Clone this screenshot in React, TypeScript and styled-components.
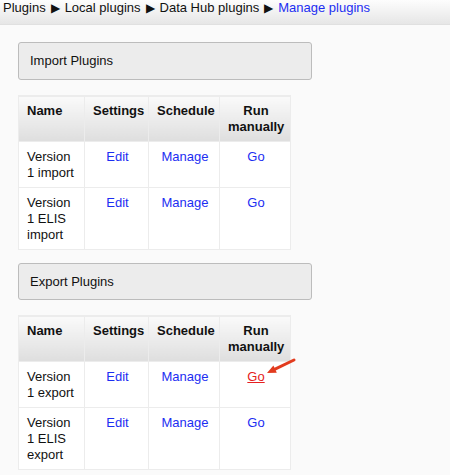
import React from "react";
import styled, { createGlobalStyle } from "styled-components";

const GlobalStyle = createGlobalStyle`
  html, body {
    margin: 0;
    padding: 0;
    background: #fafafa;
  }
  body {
    font-family: "Liberation Sans", Arial, Helvetica, sans-serif;
    font-size: 13px;
    line-height: 16px;
    color: #111;
  }
`;

const Page = styled.div`
  position: relative;
  width: 450px;
  height: 475px;
  overflow: hidden;
`;

const Breadcrumb = styled.div`
  height: 25px;
  padding: 0 0 0 3px;
  line-height: 15px;
  background: linear-gradient(#fdfdfd, #e6e6e6);
  border-bottom: 1px solid #e0e0e0;
  box-sizing: border-box;
  white-space: nowrap;
`;

const Crumb = styled.span<{ $current?: boolean }>`
  color: ${(p) => (p.$current ? "#1c2ef2" : "#111")};
`;

const Sep = styled.span`
  display: inline-block;
  margin: 0 5px 0 5px;
  font-size: 12px;
`;

const Content = styled.div`
  padding: 17px 0 0 18px;
`;

const SectionHeader = styled.div<{ $h?: number }>`
  width: 294px;
  height: ${(p) => p.$h ?? 38}px;
  box-sizing: border-box;
  padding: 0 11px;
  display: flex;
  align-items: center;
  background: #ececec;
  border: 1px solid #bcbcbc;
  border-radius: 3px;
`;

const Table = styled.table`
  margin: 15px 0 13px;
  border-collapse: collapse;
  table-layout: fixed;
  width: 272px;
  background: #fff;
`;

const Th = styled.th<{ $left?: boolean }>`
  padding: 7px 6px 6px 8px;
  font-weight: bold;
  text-align: ${(p) => (p.$left ? "left" : "center")};
  vertical-align: top;
  background: linear-gradient(#fafafa, #dedede);
  border: 1px solid #ececec;
  border-bottom: none;
`;

const Td = styled.td<{ $left?: boolean }>`
  padding: 7px 6px 6px 8px;
  text-align: ${(p) => (p.$left ? "left" : "center")};
  vertical-align: top;
  border: 1px solid #ececec;
`;

const Link = styled.a<{ $hot?: boolean }>`
  color: ${(p) => (p.$hot ? "#e52020" : "#1c2ef2")};
  text-decoration: ${(p) => (p.$hot ? "underline" : "none")};
  cursor: pointer;
`;

const Arrow = styled.svg`
  position: absolute;
  left: 264px;
  top: 355px;
`;

type Row = { name: string; hot?: boolean };

const PluginTable = ({ rows }: { rows: Row[] }) => (
  <Table>
    <colgroup>
      <col style={{ width: 66 }} />
      <col style={{ width: 64 }} />
      <col style={{ width: 71 }} />
      <col style={{ width: 71 }} />
    </colgroup>
    <thead>
      <tr>
        <Th $left>Name</Th>
        <Th>Settings</Th>
        <Th>Schedule</Th>
        <Th>Run manually</Th>
      </tr>
    </thead>
    <tbody>
      {rows.map((r) => (
        <tr key={r.name}>
          <Td $left>{r.name}</Td>
          <Td>
            <Link>Edit</Link>
          </Td>
          <Td>
            <Link>Manage</Link>
          </Td>
          <Td>
            <Link $hot={r.hot}>Go</Link>
          </Td>
        </tr>
      ))}
    </tbody>
  </Table>
);

export default function App() {
  return (
    <Page>
      <GlobalStyle />
      <Breadcrumb>
        <Crumb>Plugins</Crumb>
        <Sep>▶</Sep>
        <Crumb>Local plugins</Crumb>
        <Sep>▶</Sep>
        <Crumb>Data Hub plugins</Crumb>
        <Sep>▶</Sep>
        <Crumb $current>Manage plugins</Crumb>
      </Breadcrumb>
      <Content>
        <SectionHeader>Import Plugins</SectionHeader>
        <PluginTable rows={[{ name: "Version 1 import" }, { name: "Version 1 ELIS import" }]} />
        <SectionHeader $h={37}>Export Plugins</SectionHeader>
        <PluginTable rows={[{ name: "Version 1 export", hot: true }, { name: "Version 1 ELIS export" }]} />
      </Content>
      <Arrow width="36" height="24" viewBox="0 0 36 24">
        <line x1="30" y1="5" x2="10" y2="14.6" stroke="#e23b1e" strokeWidth="3" strokeLinecap="round" />
        <polygon points="3,18 9.4,10.5 12.8,17.7" fill="#e23b1e" />
      </Arrow>
    </Page>
  );
}
